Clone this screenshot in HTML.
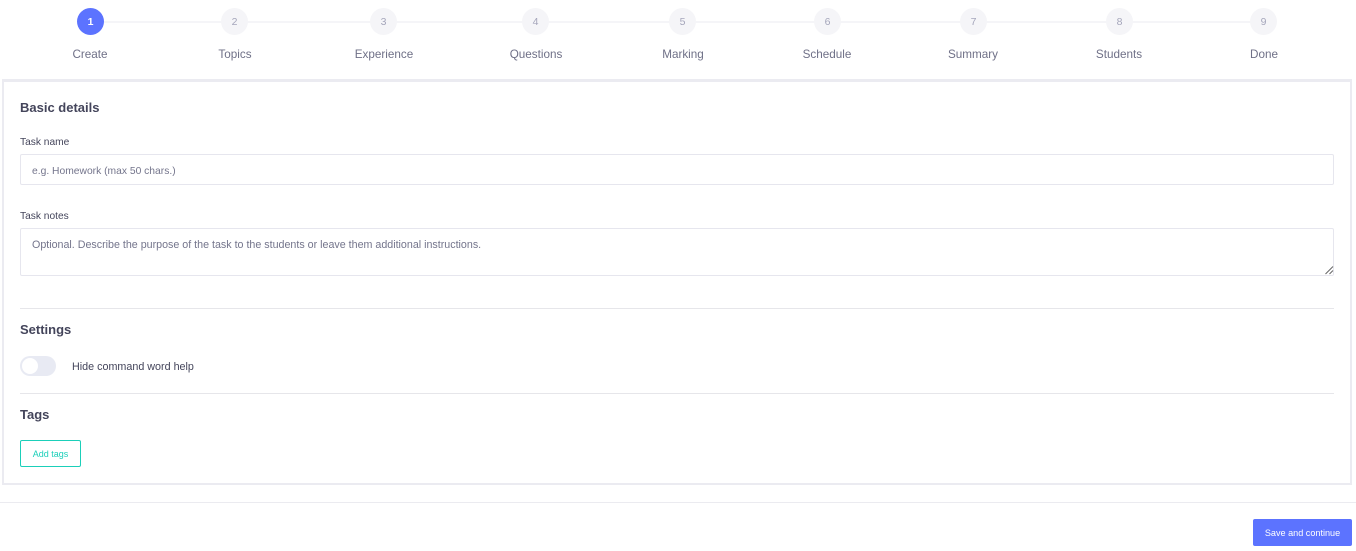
<!DOCTYPE html>
<html><head><meta charset="utf-8"><style>
html,body{margin:0;padding:0;background:#fff}
body{position:relative;width:1356px;height:551px;overflow:hidden;font-family:"Liberation Sans",sans-serif}
div{position:absolute;box-sizing:border-box;white-space:nowrap}
.line{left:90px;width:1173px;top:21px;height:2px;background:#f5f5f8}
.c{top:8px;width:27px;height:27px;border-radius:50%;background:#f5f5f8;color:#a5a6bb;font-size:10.5px;line-height:28px;text-align:center}
.l{top:47px;width:120px;text-align:center;font-size:11.7px;line-height:15px;color:#6f7087}
.h{left:20px;font-size:13px;font-weight:bold;color:#44455b;line-height:18px}
.lab{left:20px;font-size:10.2px;color:#44455b;line-height:14px}
.inp{left:20px;width:1314px;border:1px solid #e6e6ee;border-radius:2px;background:#fff}
.ph{left:32px;font-size:10.7px;color:#74758c;line-height:14px}
.hr{left:20px;width:1314px;height:1px;background:#e6e6ea}
</style></head><body>
<div class="line"></div>
<div class="c" style="left:77px;background:#5c73ff;color:#fff;font-weight:bold">1</div>
<div class="c" style="left:221px">2</div>
<div class="c" style="left:370px">3</div>
<div class="c" style="left:522px">4</div>
<div class="c" style="left:669px">5</div>
<div class="c" style="left:814px">6</div>
<div class="c" style="left:960px">7</div>
<div class="c" style="left:1106px">8</div>
<div class="c" style="left:1250px">9</div>
<div class="l" style="left:30px">Create</div>
<div class="l" style="left:175px">Topics</div>
<div class="l" style="left:324px">Experience</div>
<div class="l" style="left:476px">Questions</div>
<div class="l" style="left:623px">Marking</div>
<div class="l" style="left:767px">Schedule</div>
<div class="l" style="left:913px">Summary</div>
<div class="l" style="left:1059px">Students</div>
<div class="l" style="left:1204px">Done</div>

<div style="left:2px;top:79px;width:1350px;height:406px;border:2px solid #ebebf1;border-top-width:3px"></div>

<div class="h" style="top:99px">Basic details</div>
<div class="lab" style="top:136px">Task name</div>
<div class="inp" style="top:154px;height:31px"></div>
<div class="ph" style="top:165px;font-size:10.3px">e.g. Homework (max 50 chars.)</div>
<div class="lab" style="top:210px">Task notes</div>
<div class="inp" style="top:228px;height:48px"></div>
<div class="ph" style="top:238px">Optional. Describe the purpose of the task to the students or leave them additional instructions.</div>
<svg style="position:absolute;left:1325px;top:266px" width="9" height="9" viewBox="0 0 9 9"><path d="M0.5 8 L8 0.5 M4.5 8 L8 4.5" stroke="#666" stroke-width="1" fill="none"/></svg>
<div class="hr" style="top:308px"></div>
<div class="h" style="top:321px">Settings</div>
<div style="left:20px;top:356px;width:36px;height:20px;border-radius:10px;background:#e8eaf3"></div>
<div style="left:22px;top:358px;width:16px;height:16px;border-radius:50%;background:#fff"></div>
<div class="lab" style="left:72px;top:360px;font-size:10.75px">Hide command word help</div>
<div class="hr" style="top:393px"></div>
<div class="h" style="top:406px">Tags</div>
<div style="left:20px;top:440px;width:61px;height:27px;border:1px solid #1bcfb9;border-radius:2px;color:#1bcfb9;font-size:9px;line-height:26px;text-align:center">Add tags</div>
<div style="left:0;top:502px;width:1356px;height:1px;background:#ebebf0"></div>
<div style="left:1253px;top:519px;width:99px;height:27px;background:#5c73ff;border-radius:2px;color:#fff;font-size:9.1px;line-height:28px;text-align:center">Save and continue</div>
</body></html>
